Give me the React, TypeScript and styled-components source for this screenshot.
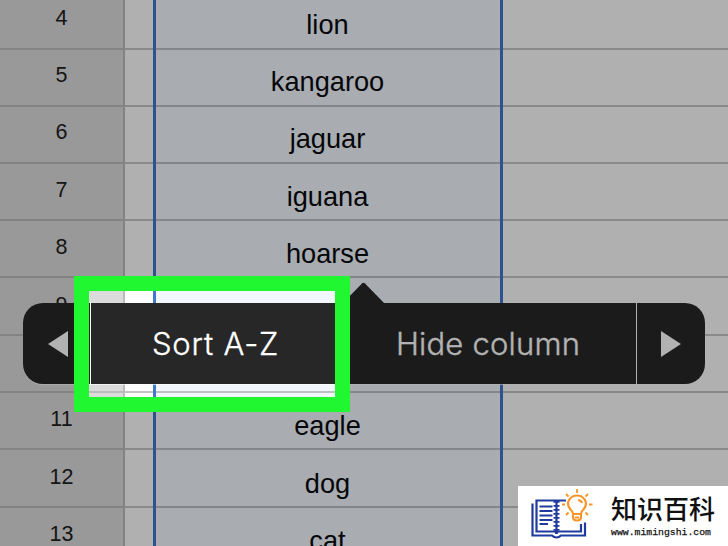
import React from "react";
import styled, { createGlobalStyle } from "styled-components";

const GlobalStyle = createGlobalStyle`
  * { box-sizing: border-box; }
  html, body { margin: 0; padding: 0; overflow: hidden; }
`;

const Screen = styled.main`
  position: relative;
  width: 728px;
  height: 546px;
  overflow: hidden;
  background: #fff;
  font-family: "Liberation Sans", Arial, sans-serif;
`;

const Sheet = styled.div`
  display: flex;
  flex-direction: column;
  margin-top: -8.3px;
`;

const Row = styled.div<{ $height: number }>`
  display: grid;
  grid-template-columns: 125px 28px 350px 1fr;
  flex: none;
  height: ${(p) => p.$height}px;
`;

const RowNumber = styled.div`
  display: flex;
  align-items: flex-end;
  justify-content: center;
  padding-bottom: 17.3px;
  border-right: 2px solid #bcbcbc;
  border-bottom: 2px solid #bcbcbc;
  background: #dbdbdb;
  color: #202020;
  font-size: 21.5px;
  line-height: 24px;
`;

const BlankCell = styled.div`
  border-bottom: 2px solid #c4c4c4;
  background: #fdfdfd;
`;

const SelectedCell = styled.div`
  position: relative;
  display: flex;
  align-items: flex-end;
  justify-content: center;
  padding: 0 1px 6.3px 0;
  border-bottom: 2px solid #bdc1c6;
  background: #f2f6fd;
  color: #08090d;
  font-size: 27.2px;
  line-height: 32px;
  &::after {
    content: "";
    position: absolute;
    inset: 0 0 -2px;
    border: solid #4078cc;
    border-width: 0 3px;
  }
`;

const Popover = styled.div`
  position: absolute;
  left: 23px;
  top: 303px;
  display: grid;
  grid-template-columns: 68px 252px 294px 68px;
  width: 682px;
  height: 81px;
  border-radius: 20px;
  background: #272728;
  box-shadow: 0 1px 1px rgba(255, 255, 255, 0.7);
`;

const Pointer = styled.svg`
  position: absolute;
  left: 319px;
  top: -21px;
  width: 43px;
  height: 22px;
  fill: #272728;
`;

const MenuItem = styled.button<{ $spacing: number; $line?: boolean }>`
  display: flex;
  align-items: center;
  justify-content: center;
  margin: -1px 0;
  padding: 0 3px 1px 0;
  border: 0;
  border-right: ${(p) => (p.$line ? "1px solid #fff" : "0")};
  background: none;
  color: #fff;
  font: 300 31px Inter, sans-serif;
  letter-spacing: ${(p) => p.$spacing}px;
  -webkit-text-stroke: 0.35px #fff;
  white-space: nowrap;
`;

const ArrowButton = styled.button<{ $line?: boolean }>`
  display: flex;
  align-items: center;
  justify-content: center;
  margin: -1px 0;
  padding: 0 0 0 ${(p) => (p.$line ? 3 : 0)}px;
  border: 0;
  border-right: ${(p) => (p.$line ? "1px solid #fff" : "0")};
  background: none;
  svg { width: 20px; height: 26px; fill: #fff; }
`;

const Spotlight = styled.div`
  position: absolute;
  left: 74px;
  top: 276px;
  width: 276px;
  height: 136px;
  border: 15px solid #20f730;
  box-shadow: 0 0 0 900px rgba(0, 0, 0, 0.3);
`;

const Brand = styled.aside`
  position: absolute;
  right: 0;
  bottom: 0;
  display: flex;
  width: 210px;
  height: 60px;
  padding-left: 12px;
  background: #fff;
`;

const BookIcon = styled.svg`
  flex: none;
  width: 68px;
  height: 60px;
  fill: none;
`;

const BrandText = styled.div`
  display: flex;
  flex-direction: column;
  padding: 3px 0 0 13px;
`;

const BrandName = styled.div`
  color: #111;
  font: 500 26px/38px "Noto Sans CJK SC", sans-serif;
`;

const BrandUrl = styled.div`
  color: #111;
  font: 400 9.8px/12px "Liberation Mono", monospace;
  -webkit-text-stroke: 0.25px #111;
`;

const rows = [
  { n: 4, name: "lion", height: 58 },
  { n: 5, name: "kangaroo", height: 57 },
  { n: 6, name: "jaguar", height: 57 },
  { n: 7, name: "iguana", height: 57.3 },
  { n: 8, name: "hoarse", height: 57.3 },
  { n: 9, name: "goat", height: 58.1 },
  { n: 10, name: "fox", height: 57 },
  { n: 11, name: "eagle", height: 56.9 },
  { n: 12, name: "dog", height: 58 },
  { n: 13, name: "cat", height: 57 },
];

export default function App() {
  return (
    <Screen>
      <GlobalStyle />
      <Sheet>
        {rows.map((row) => (
          <Row key={row.n} $height={row.height}>
            <RowNumber>{row.n}</RowNumber>
            <BlankCell />
            <SelectedCell>{row.name}</SelectedCell>
            <BlankCell />
          </Row>
        ))}
      </Sheet>
      <Popover>
        <Pointer viewBox="0 0 43 22">
          <path d="M0 22 20 1.5Q21.500 0 23 1.500L43 22Z" />
        </Pointer>
        <ArrowButton $line aria-label="Previous">
          <svg viewBox="0 0 20 26"><path d="M20 0V26L0 13Z" /></svg>
        </ArrowButton>
        <MenuItem $spacing={0.8}>Sort A-Z</MenuItem>
        <MenuItem $spacing={0.2} $line>Hide column</MenuItem>
        <ArrowButton aria-label="Next">
          <svg viewBox="0 0 20 26"><path d="M0 0V26L20 13Z" /></svg>
        </ArrowButton>
      </Popover>
      <Spotlight />
      <Brand>
        <BookIcon viewBox="0 0 68 60">
          <g stroke="#203a9d" strokeWidth="2.2">
            <path d="M36 14.500H6.500V45.500H24Q26.500 45.500 26.500 48Q26.500 45.500 29 45.500H51V38" />
            <path d="M2.500 17.500V49.500H22Q24 51.500 26.500 51.500T31 49.500H55V36.500" />
            <path d="M9.500 20.500H22.500M9.500 25H22.500M9.500 29.500H22.500M9.500 34H22.500M9.500 38H18" strokeWidth="1.900" />
            <path d="M26.500 14V48" />
            <path d="M26.500 15V46" strokeWidth="6" strokeDasharray="1.800 2.200" />
          </g>
          <g stroke="#f8962a" strokeWidth="2.200">
            <path d="M43 31V28Q43 25.500 40.500 23.500C34 15 42 9.500 47 9.500S60 15 53.500 23.500Q51 25.500 51 28V31Q51 34.500 47 34.500T43 31ZM43 28H51M45 31.500H49M48 14Q51.500 14.500 52 17" />
            <path d="M47 3V7M36 8 38.500 10.500M58 8 55.500 10.500M32 18.500H35M59 18.500H62.500M36 29 38.500 26.500M58 29 55.500 26.500" strokeWidth="1.800" />
          </g>
        </BookIcon>
        <BrandText>
          <BrandName>知识百科</BrandName>
          <BrandUrl>www.mimingshi.com</BrandUrl>
        </BrandText>
      </Brand>
    </Screen>
  );
}
